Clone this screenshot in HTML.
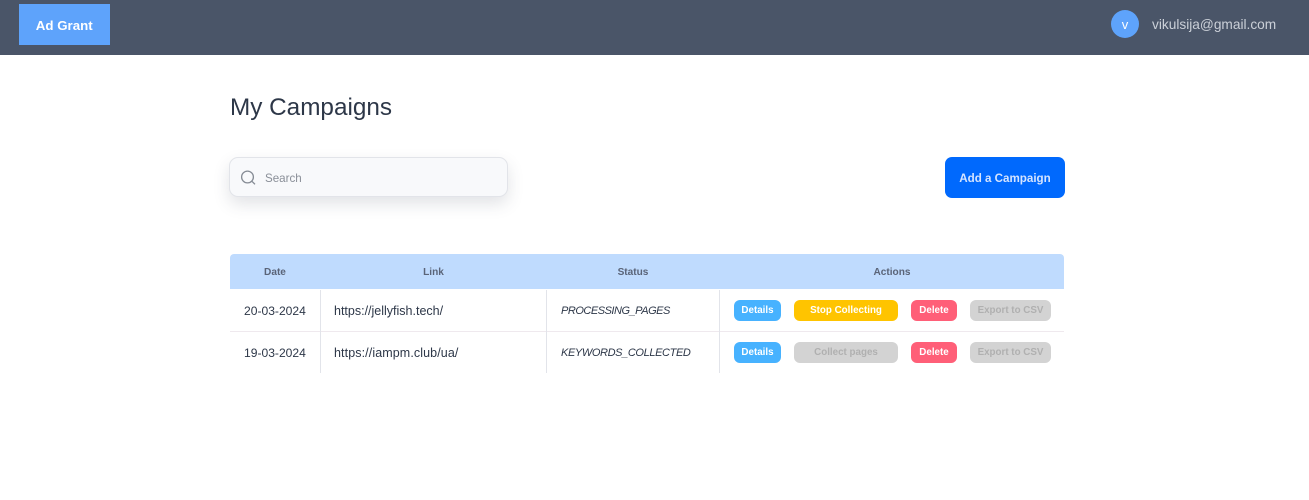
<!DOCTYPE html>
<html lang="en">
<head>
<meta charset="utf-8">
<title>My Campaigns</title>
<style>
*{box-sizing:border-box}
html,body{margin:0;padding:0;width:1309px;height:500px;overflow:hidden;background:#fff;font-family:"Liberation Sans",sans-serif}
.a{position:absolute;white-space:nowrap}
.c{text-align:center}
.btn{position:absolute;height:21px;border-radius:6px;color:#fff;font-size:9.8px;font-weight:bold;line-height:21px;text-align:center;white-space:nowrap}
.cell{font-size:12.5px;color:#2d3748;line-height:16px}
.st{font-size:11px;letter-spacing:-.38px;font-style:italic}
.th{font-size:10.1px;font-weight:bold;color:#5a6478;line-height:14px;text-align:center;top:266px}
.v{position:absolute;width:1px;background:#e2e4ea;top:290px;height:83px}
</style>
</head>
<body>
<div class="a" style="left:0;top:0;width:1309px;height:55px;background:#4a5568"></div>
<div class="a c" style="left:18.5px;top:3.5px;width:91.5px;height:41.5px;background:#5ea3fb;color:#fff;font-size:13.3px;font-weight:bold;line-height:43px">Ad Grant</div>
<div class="a c" style="left:1111px;top:10px;width:28px;height:28px;border-radius:50%;background:#5ea3fb;color:#fff;font-size:13px;line-height:29px">v</div>
<div class="a" style="left:1152px;top:16px;font-size:13.7px;line-height:18px;color:#cbd0d8">vikulsija@gmail.com</div>

<div class="a" style="left:230px;top:92px;font-size:24.3px;line-height:32px;color:#2d3748">My Campaigns</div>

<div class="a" style="left:229px;top:157px;width:279px;height:40px;border-radius:9px;background:#f8f9fb;border:1px solid #e2e4e9;box-shadow:0 7px 16px rgba(60,70,90,.15)"></div>
<svg class="a" style="left:240px;top:169px" width="18" height="18" viewBox="0 0 18 18" fill="none" stroke="#858b94" stroke-width="1.3"><circle cx="7.5" cy="8" r="5.9"/><path d="M11.8 12.2L15 15.3"/></svg>
<div class="a" style="left:265px;top:171px;font-size:11.6px;line-height:16px;color:#8a8f98">Search</div>

<div class="a c" style="left:945px;top:157px;width:120px;height:41px;border-radius:7px;background:#0069fd;color:#d4e4ff;font-size:11.6px;font-weight:bold;line-height:43px">Add a Campaign</div>

<div class="a" style="left:230px;top:254px;width:834px;height:35px;background:#bfdbfe;border-radius:4px 4px 0 0"></div>
<div class="a th" style="left:230px;width:90px">Date</div>
<div class="a th" style="left:321px;width:225px">Link</div>
<div class="a th" style="left:547px;width:172px">Status</div>
<div class="a th" style="left:720px;width:344px">Actions</div>

<div class="a" style="left:230px;top:331px;width:834px;height:1px;background:#efe9ee"></div>
<div class="v" style="left:320px"></div>
<div class="v" style="left:546px"></div>
<div class="v" style="left:719px"></div>

<div class="a cell" style="left:244px;top:303px;font-size:12.1px">20-03-2024</div>
<div class="a cell" style="left:334px;top:303px">https://jellyfish.tech/</div>
<div class="a cell st" style="left:561px;top:303px;letter-spacing:-.48px">PROCESSING_PAGES</div>
<div class="btn" style="left:734px;top:300px;width:47px;background:#47b2ff">Details</div>
<div class="btn" style="left:794px;top:300px;width:104px;background:#ffc400">Stop Collecting</div>
<div class="btn" style="left:911px;top:300px;width:46px;background:#ff5f78">Delete</div>
<div class="btn" style="left:970px;top:300px;width:81px;background:#d3d3d3;color:#b0b0b0">Export to CSV</div>

<div class="a cell" style="left:244px;top:345px;font-size:12.1px">19-03-2024</div>
<div class="a cell" style="left:334px;top:345px;letter-spacing:.1px">https://iampm.club/ua/</div>
<div class="a cell st" style="left:561px;top:345px">KEYWORDS_COLLECTED</div>
<div class="btn" style="left:734px;top:342px;width:47px;background:#47b2ff">Details</div>
<div class="btn" style="left:794px;top:342px;width:104px;background:#d3d3d3;color:#b0b0b0">Collect pages</div>
<div class="btn" style="left:911px;top:342px;width:46px;background:#ff5f78">Delete</div>
<div class="btn" style="left:970px;top:342px;width:81px;background:#d3d3d3;color:#b0b0b0">Export to CSV</div>
</body>
</html>
